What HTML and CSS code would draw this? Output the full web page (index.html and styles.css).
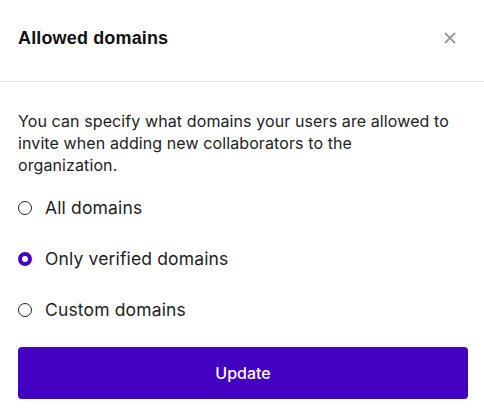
FILE: index.html
```html
<!DOCTYPE html>
<html>
<head>
<meta charset="utf-8">
<link rel="stylesheet" href="styles.css">
</head>
<body>
<div class="dialog">
  <header class="header">
    <h1 class="title">Allowed domains</h1>
    <button class="close" aria-label="Close">
      <svg width="12" height="12" viewBox="0 0 12 12"><path d="M1 1L11 11M11 1L1 11" stroke="#999" stroke-width="1.8" stroke-linecap="butt"/></svg>
    </button>
  </header>
  <div class="body">
    <p class="desc">You can specify what domains your users are allowed to invite when adding new collaborators to the organization.</p>
    <div class="options">
      <label class="option"><span class="radio"></span>All domains</label>
      <label class="option"><span class="radio checked"></span>Only verified domains</label>
      <label class="option"><span class="radio"></span>Custom domains</label>
    </div>
    <button class="update">Update</button>
  </div>
</div>
</body>
</html>
```
FILE: styles.css
```css
* { box-sizing: border-box; }
html, body { margin: 0; padding: 0; background: #fff; }
body { font-family: Inter, "Noto Sans", sans-serif; color: #222; }
.dialog { width: 484px; }
.header {
  height: 82px;
  border-bottom: 1px solid #e4e4e4;
  display: flex;
  align-items: center;
  justify-content: space-between;
  padding: 0 28px 5px 18px;
}
.title {
  margin: 0;
  font-family: "Liberation Sans", Arial, sans-serif;
  font-weight: 700;
  font-size: 18px;
  letter-spacing: 0.15px;
  color: #111;
}
.close {
  border: 0; background: none; padding: 0;
  width: 12px; height: 12px;
  display: flex;
}
.body { padding: 28px 16px 14px 18px; }
.desc {
  margin: 0;
  max-width: 434px;
  font-size: 16px;
  line-height: 22px;
  letter-spacing: 0.1px;
  color: #222;
}
.options {
  display: flex;
  flex-direction: column;
  gap: 29px;
  margin-top: 21px;
}
.option {
  display: flex;
  align-items: center;
  gap: 13px;
  font-size: 17.5px;
  line-height: 22px;
  letter-spacing: 0.15px;
  color: #222;
}
.radio {
  width: 14px; height: 14px;
  border-radius: 50%;
  border: 1.75px solid #222;
  flex: none;
}
.radio.checked { border: 4px solid #4400c2; }
.update {
  margin-top: 26px;
  width: 450px;
  height: 52px;
  border: 0;
  border-radius: 4px;
  background: #4400c2;
  color: #fff;
  font-family: Inter, sans-serif;
  font-size: 16px;
  font-weight: 500;
}
```
